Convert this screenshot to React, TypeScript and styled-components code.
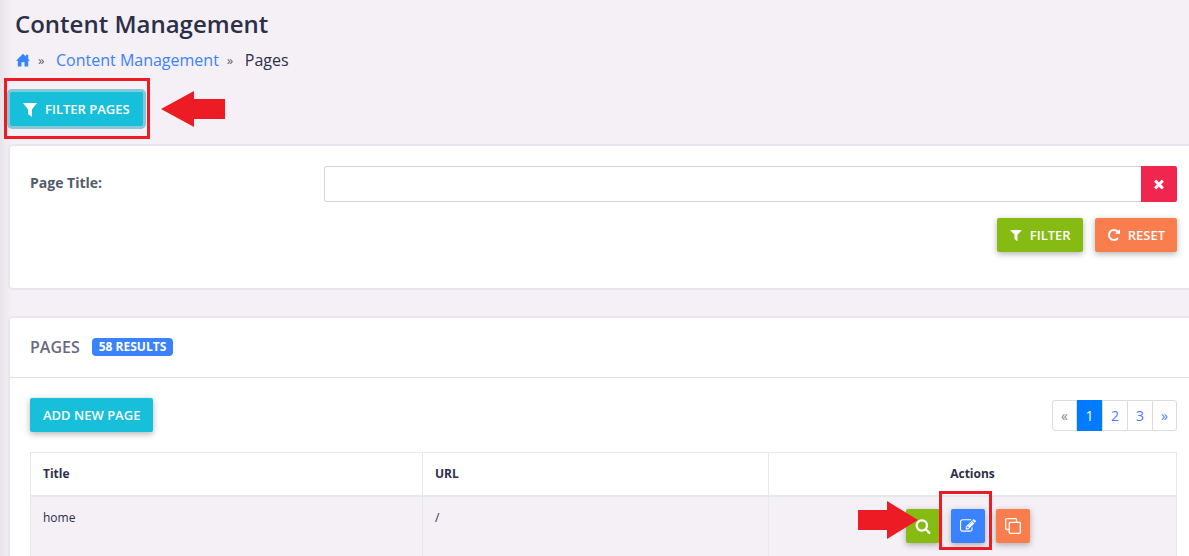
import React from "react";
import styled, { createGlobalStyle } from "styled-components";

const GlobalStyle = createGlobalStyle`
  * { box-sizing: border-box; }
  body {
    margin: 0;
    background: #f5f0f6;
    color: #2c2f48;
    font-family: "Open Sans", "Noto Sans", sans-serif;
    font-size: 13px;
    overflow: hidden;
  }
  button, input { font-family: inherit; }
  a { color: #3a82ff; text-decoration: none; }
`;

const Main = styled.main`
  height: 100vh;
  overflow: hidden;
  padding: 8px 0 0 8px;
  background: linear-gradient(to right, #e7e4e9, #f5f0f6 12px);
`;

const Heading = styled.h1`
  margin: 0;
  padding-left: 7px;
  font-size: 24px;
  font-weight: 600;
  line-height: 32px;
`;

const Breadcrumb = styled.nav`
  display: flex;
  align-items: center;
  margin-top: 8px;
  padding-left: 8px;
  font-size: 16px;
  line-height: 24px;
  a { display: flex; }
`;

const Separator = styled.span`
  width: 26px;
  padding-left: 8px;
  font-size: 13px;
  color: #5a5d70;
`;

const FilterToggle = styled.div`
  position: relative;
  width: fit-content;
  margin: 20px 0 18px 2px;
`;

const tones = {
  cyan: "#18bfda",
  green: "#86bb13",
  orange: "#f97d4d",
  blue: "#3a82ff",
};

const Button = styled.button<{ $tone: keyof typeof tones; $focused?: boolean; $wide?: boolean }>`
  display: inline-flex;
  align-items: center;
  gap: 7px;
  height: 34px;
  padding: 0 ${(p) => (p.$wide ? 13 : 12)}px;
  border: 0;
  border-radius: 2px;
  background: ${(p) => tones[p.$tone]};
  color: #fff;
  font-size: 13px;
  font-weight: 600;
  line-height: 20px;
  white-space: nowrap;
  text-transform: uppercase;
  box-shadow: ${(p) => (p.$focused ? "0 0 0 3px #86c9d6" : "0 2px 6px rgba(0, 0, 0, 0.3)")};
`;

const IconButton = styled(Button)`
  width: 34px;
  padding: 0;
  justify-content: center;
`;

const Card = styled.section`
  border: 2px solid #eae4ed;
  border-right: 0;
  border-radius: 5px 0 0 5px;
  background: #fff;
  & + & { margin-top: 26px; }
`;

const FilterForm = styled.form`
  padding: 20px 12px 36px 20px;
`;

const Field = styled.div`
  display: grid;
  grid-template-columns: minmax(0, 294fr) minmax(0, 853fr);
  align-items: start;
`;

const Label = styled.label`
  padding-top: 7px;
  color: #535c6c;
  font-size: 14px;
  font-weight: 700;
  line-height: 20px;
`;

const InputGroup = styled.div`
  display: flex;
`;

const TextInput = styled.input`
  flex: 1;
  min-width: 0;
  height: 36px;
  padding: 0 12px;
  border: 1px solid #d6d6d8;
  border-right: 0;
  border-radius: 3px 0 0 3px;
  font-size: 14px;
  outline: none;
`;

const ClearButton = styled.button`
  display: flex;
  align-items: center;
  justify-content: center;
  width: 36px;
  height: 36px;
  padding: 0;
  border: 0;
  border-radius: 0 2px 2px 0;
  background: #f0264e;
  color: #fff;
`;

const FormActions = styled.div`
  display: flex;
  justify-content: flex-end;
  gap: 12px;
  margin-top: 16px;
`;

const CardHeader = styled.header`
  display: flex;
  align-items: center;
  gap: 12px;
  height: 60px;
  padding: 0 20px 1px;
  border-bottom: 1px solid #dedde0;
`;

const CardTitle = styled.h2`
  margin: 0;
  color: #6b6880;
  font-size: 16px;
  font-weight: 600;
  line-height: 24px;
`;

const Badge = styled.span`
  padding: 0 7px;
  border-radius: 4px;
  background: #3a82ff;
  color: #fff;
  font-size: 12px;
  font-weight: 700;
  line-height: 18px;
`;

const CardBody = styled.div`
  padding: 20px 12px 20px 20px;
`;

const Toolbar = styled.div`
  display: flex;
  align-items: center;
  justify-content: space-between;
  margin-bottom: 20px;
`;

const Pagination = styled.nav`
  display: flex;
  border: 1px solid #dcdce0;
  border-radius: 3px;
`;

const PageLink = styled.a<{ $active?: boolean; $muted?: boolean }>`
  width: ${(p) => (p.$active ? 26 : 25)}px;
  margin: ${(p) => (p.$active ? "-1px 0" : "0")};
  padding: ${(p) => (p.$active ? "1px 0" : "0")};
  text-align: center;
  font-size: 14px;
  line-height: 29px;
  background: ${(p) => (p.$active ? "#007bff" : "transparent")};
  color: ${(p) => (p.$active ? "#fff" : p.$muted ? "#7d858d" : "#4a7dff")};
  &:first-child { width: 23px; }
  &:last-child { width: 24px; }
  & + & { border-left: ${(p) => (p.$active ? 0 : 1)}px solid #dcdce0; }
`;

const Table = styled.table`
  width: 100%;
  table-layout: fixed;
  border-collapse: collapse;
  border: 1px solid #e6e9ec;
  color: #2c2f48;
  font-size: 12px;
  line-height: 18px;
  th, td {
    padding: 12px;
    border: 1px solid #e6e9ec;
    text-align: left;
    vertical-align: top;
  }
  th { border-bottom-width: 2px; font-weight: 700; }
  td { padding-bottom: 16px; background: #f5f0f6; }
  th:last-child { text-align: center; }
  th:nth-child(1) { width: 34.2%; }
  th:nth-child(2) { width: 30.2%; }
`;

const RowActions = styled.div`
  display: flex;
  justify-content: center;
  gap: 11px;
  padding-right: 10px;
`;

const EditAction = styled.div`
  position: relative;
`;

const Marker = styled.span<{ $top: number; $right: number; $bottom: number; $left: number }>`
  position: absolute;
  top: -${(p) => p.$top}px;
  right: -${(p) => p.$right}px;
  bottom: -${(p) => p.$bottom}px;
  left: -${(p) => p.$left}px;
  border: 3px solid #ed1c24;
  pointer-events: none;
`;

const Arrow = styled.svg<{ $side: "left" | "right" }>`
  position: absolute;
  top: -2px;
  ${(p) => (p.$side === "right" ? "left: 151px;" : "right: 67px; top: -9px;")}
  pointer-events: none;
`;

const paths = {
  filter:
    "M1595 295q17 41-14 70l-493 493v742q0 42-39 59-13 5-25 5-27 0-45-19l-256-256q-19-19-19-45v-486l-493-493q-31-29-14-70 17-39 59-39h1280q42 0 59 39z",
  search:
    "M1216 832q0-185-131.5-316.5t-316.5-131.5-316.5 131.5-131.5 316.5 131.5 316.5 316.5 131.5 316.5-131.5 131.5-316.5zm512 832q0 52-38 90t-90 38q-54 0-90-38l-343-342q-179 124-399 124-143 0-273.5-55.5t-225-150-150-225-55.5-273.5 55.5-273.5 150-225 225-150 273.5-55.5 273.5 55.5 225 150 150 225 55.5 273.5q0 220-124 399l343 343q37 37 37 90z",
  reset:
    "M1664 256v448q0 26-19 45t-45 19h-448q-42 0-59-40-17-39 14-69l138-138q-148-137-349-137-104 0-198.5 40.5t-163.5 109.5-109.5 163.5-40.5 198.5 40.5 198.5 109.5 163.5 163.5 109.5 198.5 40.5q119 0 225-52t179-147q7-10 23-12 15 0 25 9l137 138q9 8 9.5 20.5t-7.5 22.5q-109 132-264 204.5t-327 72.5q-156 0-298-61t-245-164-164-245-61-298 61-298 164-245 245-164 298-61q147 0 284.5 55.5t244.5 156.5l130-129q29-31 70-14 39 17 39 59z",
  close:
    "M1490 1322q0 40-28 68l-136 136q-28 28-68 28t-68-28l-294-294-294 294q-28 28-68 28t-68-28l-136-136q-28-28-28-68t28-68l294-294-294-294q-28-28-28-68t28-68l136-136q28-28 68-28t68 28l294 294 294-294q28-28 68-28t68 28l136 136q28 28 28 68t-28 68l-294 294 294 294q28 28 28 68z",
  edit:
    "M888 1184l116-116-152-152-116 116v56h96v96h56zm440-720q-16-16-33 1l-350 350q-17 17-1 33t33-1l350-350q17-17 1-33zm80 594v190q0 119-84.5 203.5t-203.5 84.5h-832q-119 0-203.5-84.5t-84.5-203.5v-832q0-119 84.5-203.5t203.5-84.5h832q63 0 117 25 15 7 18 23 3 17-9 29l-49 49q-14 14-32 8-23-6-45-6h-832q-66 0-113 47t-47 113v832q0 66 47 113t113 47h832q66 0 113-47t47-113v-126q0-13 9-22l64-64q15-15 35-7t20 29zm-96-738l288 288-672 672h-288v-288zm444 132l-92 92-288-288 92-92q28-28 68-28t68 28l152 152q28 28 28 68t-28 68z",
};

function Icon({ name, size = 14 }: { name: keyof typeof paths; size?: number }) {
  return (
    <svg width={size} height={size} viewBox="0 0 1792 1792" fill="currentColor" aria-hidden="true">
      <path d={paths[name]} />
    </svg>
  );
}

function HomeIcon() {
  return (
    <svg width="14" height="14" viewBox="0 0 14 14" fill="currentColor" aria-hidden="true">
      <path d="M7 .8 0 7.700h1.800V13.600h3.700V9.200h3v4.400h3.700V7.700H14L12.200 5.900V1.800H9.800v1.800z" />
    </svg>
  );
}

function FunnelIcon() {
  return (
    <svg width="15" height="15" viewBox="0 0 15 15" fill="currentColor" aria-hidden="true">
      <path d="M0 1h14L9 7.300V15L5 12V7.300z" />
    </svg>
  );
}

function CopyIcon() {
  return (
    <svg width="16" height="16" viewBox="0 0 16 16" fill="none" stroke="currentColor" strokeWidth="1.300" aria-hidden="true">
      <path d="M4 11.500H1.500a.8.8 0 0 1-.8-.8V1.500a.8.8 0 0 1 .8-.8h9.200a.8.8 0 0 1 .8.8V4" />
      <rect x="4.300" y="4.300" width="11" height="11" rx=".8" />
    </svg>
  );
}

export default function App() {
  return (
    <>
      <GlobalStyle />
      <Main>
        <Heading>Content Management</Heading>
        <Breadcrumb aria-label="Breadcrumb">
          <a href="#home" aria-label="Home"><HomeIcon /></a>
          <Separator>»</Separator>
          <a href="#content">Content Management</a>
          <Separator>»</Separator>
          <span>Pages</span>
        </Breadcrumb>
        <FilterToggle>
          <Button type="button" $tone="cyan" $focused $wide>
            <FunnelIcon />
            Filter Pages
          </Button>
          <Marker $top={14} $right={7} $bottom={13} $left={6} />
          <Arrow $side="right" width="64" height="38" viewBox="0 0 64 38" fill="#ed1c24" aria-hidden="true">
            <path d="M0 19 33 1v8h31v20H33v8z" />
          </Arrow>
        </FilterToggle>

        <Card>
          <FilterForm onSubmit={(e) => e.preventDefault()}>
            <Field>
              <Label htmlFor="page-title">Page Title:</Label>
              <InputGroup>
                <TextInput id="page-title" type="text" />
                <ClearButton type="button" aria-label="Clear page title"><Icon name="close" /></ClearButton>
              </InputGroup>
            </Field>
            <FormActions>
              <Button type="submit" $tone="green"><Icon name="filter" />Filter</Button>
              <Button type="reset" $tone="orange"><Icon name="reset" />Reset</Button>
            </FormActions>
          </FilterForm>
        </Card>

        <Card>
          <CardHeader>
            <CardTitle>PAGES</CardTitle>
            <Badge>58 RESULTS</Badge>
          </CardHeader>
          <CardBody>
            <Toolbar>
              <Button type="button" $tone="cyan" $wide>Add New Page</Button>
              <Pagination aria-label="Pagination">
                <PageLink href="#previous" $muted>«</PageLink>
                <PageLink href="#1" $active aria-current="page">1</PageLink>
                <PageLink href="#2">2</PageLink>
                <PageLink href="#3">3</PageLink>
                <PageLink href="#next">»</PageLink>
              </Pagination>
            </Toolbar>
            <Table>
              <thead>
                <tr><th>Title</th><th>URL</th><th>Actions</th></tr>
              </thead>
              <tbody>
                <tr>
                  <td>home</td>
                  <td>/</td>
                  <td>
                    <RowActions>
                      <IconButton type="button" $tone="green" aria-label="View page"><Icon name="search" size={16} /></IconButton>
                      <EditAction>
                        <IconButton type="button" $tone="blue" aria-label="Edit page"><Icon name="edit" size={16} /></IconButton>
                        <Marker $top={18} $right={7} $bottom={7} $left={12} />
                        <Arrow $side="left" width="60" height="40" viewBox="0 0 60 40" fill="#ed1c24" aria-hidden="true">
                          <path d="M0 10h29V1l31 19-31 19v-9H0z" />
                        </Arrow>
                      </EditAction>
                      <IconButton type="button" $tone="orange" aria-label="Copy page"><CopyIcon /></IconButton>
                    </RowActions>
                  </td>
                </tr>
              </tbody>
            </Table>
          </CardBody>
        </Card>
      </Main>
    </>
  );
}
